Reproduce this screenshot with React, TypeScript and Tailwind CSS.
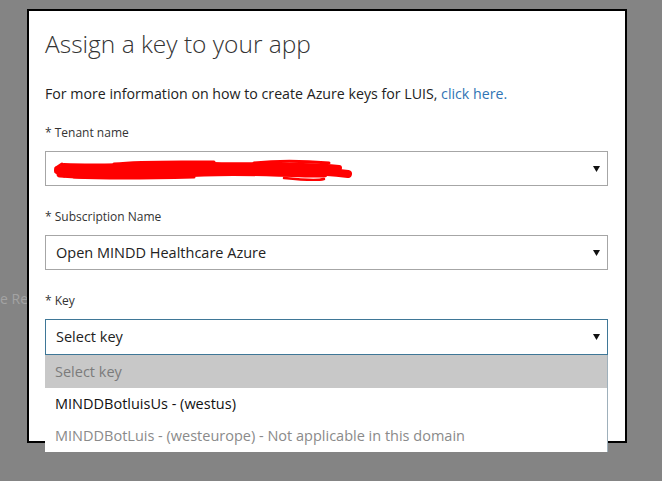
import React from 'react';

const font = { fontFamily: '"Open Sans", "Noto Sans", Arial, sans-serif' };

function Arrow() {
  return (
    <svg width="7" height="6" viewBox="0 0 7 6" className="absolute right-[7px] top-1/2 -translate-y-1/2">
      <path d="M0 0 L7 0 L3.5 6 Z" fill="#111" />
    </svg>
  );
}

function Scribble() {
  return (
    <svg width="300" height="28" viewBox="0 0 300 28" className="absolute left-[8px] top-[4px]">
      <g fill="none" stroke="#f00" strokeLinecap="round" strokeLinejoin="round">
        <path d="M4 14 C40 17 80 15 120 13 C160 11 200 14 240 15 C260 15 280 16 294 18" strokeWidth="8" />
        <path d="M6 18 C50 21 100 19 150 17 C190 15 230 18 270 18" strokeWidth="7" />
        <path d="M10 10 C60 12 110 8 160 9 C200 10 240 8 285 12" strokeWidth="6" />
        <path d="M60 8 C90 5 130 6 160 6" strokeWidth="3" />
        <path d="M200 7 C220 5 250 5 275 7" strokeWidth="3" />
        <path d="M230 22 C250 24 262 25 270 23" strokeWidth="2.5" />
        <path d="M20 21 C60 23 100 22 140 21" strokeWidth="3" />
        <path d="M2 12 L8 8 M2 16 L10 20" strokeWidth="3" />
      </g>
    </svg>
  );
}

function Field({ label, children }: { label: string; children: React.ReactNode }) {
  return (
    <div className="flex flex-col">
      <label className="text-[12px] leading-[18px] text-[#333] mb-[9px]">* {label}</label>
      {children}
    </div>
  );
}

export default function App() {
  return (
    <div className="relative w-[662px] h-[481px] bg-[#848484] overflow-hidden pl-[27px] pt-[9px]" style={font}>
      <span className="absolute left-0 top-[288px] text-[14px] text-[#a3a3a3]">e Re</span>

      <div className="relative z-10 w-[600px] h-[434px] bg-white border-2 border-black px-[16px] pt-[17px] flex flex-col">
        <h1 className="text-[24.5px] leading-[32px] font-light text-[#333]">Assign a key to your app</h1>

        <p className="mt-[24px] text-[14.2px] leading-[20px] text-[#222]">
          For more information on how to create Azure keys for LUIS, <a className="text-[#2f74b5]">click here.</a>
        </p>

        <div className="mt-[20px] flex flex-col gap-[22px] w-[563px]">
          <Field label="Tenant name">
            <div className="relative h-[35px] border border-[#a6a6a6] bg-white">
              <Scribble />
              <Arrow />
            </div>
          </Field>

          <Field label="Subscription Name">
            <div className="relative h-[35px] border border-[#a6a6a6] bg-white flex items-center pl-[10px] text-[14.5px] text-[#222]">
              Open MINDD Healthcare Azure
              <Arrow />
            </div>
          </Field>

          <Field label="Key">
            <div className="relative">
              <div className="relative h-[36px] border border-[#3f7797] bg-white flex items-center pl-[10px] text-[14.5px] text-[#222]">
                Select key
                <Arrow />
              </div>
              <ul className="absolute left-0 top-[36px] w-[563px] bg-white border-r border-[#9fb0bb] text-[14.5px]">
                <li className="h-[33px] bg-[#c8c8c8] flex items-center pl-[10px] text-[#7b7b7b]">Select key</li>
                <li className="h-[32px] flex items-center pl-[10px] text-[#111]">MINDDBotluisUs - (westus)</li>
                <li className="h-[32px] flex items-center pl-[10px] text-[#8a8a8a]">MINDDBotLuis - (westeurope) - Not applicable in this domain</li>
              </ul>
            </div>
          </Field>
        </div>
      </div>
    </div>
  );
}
